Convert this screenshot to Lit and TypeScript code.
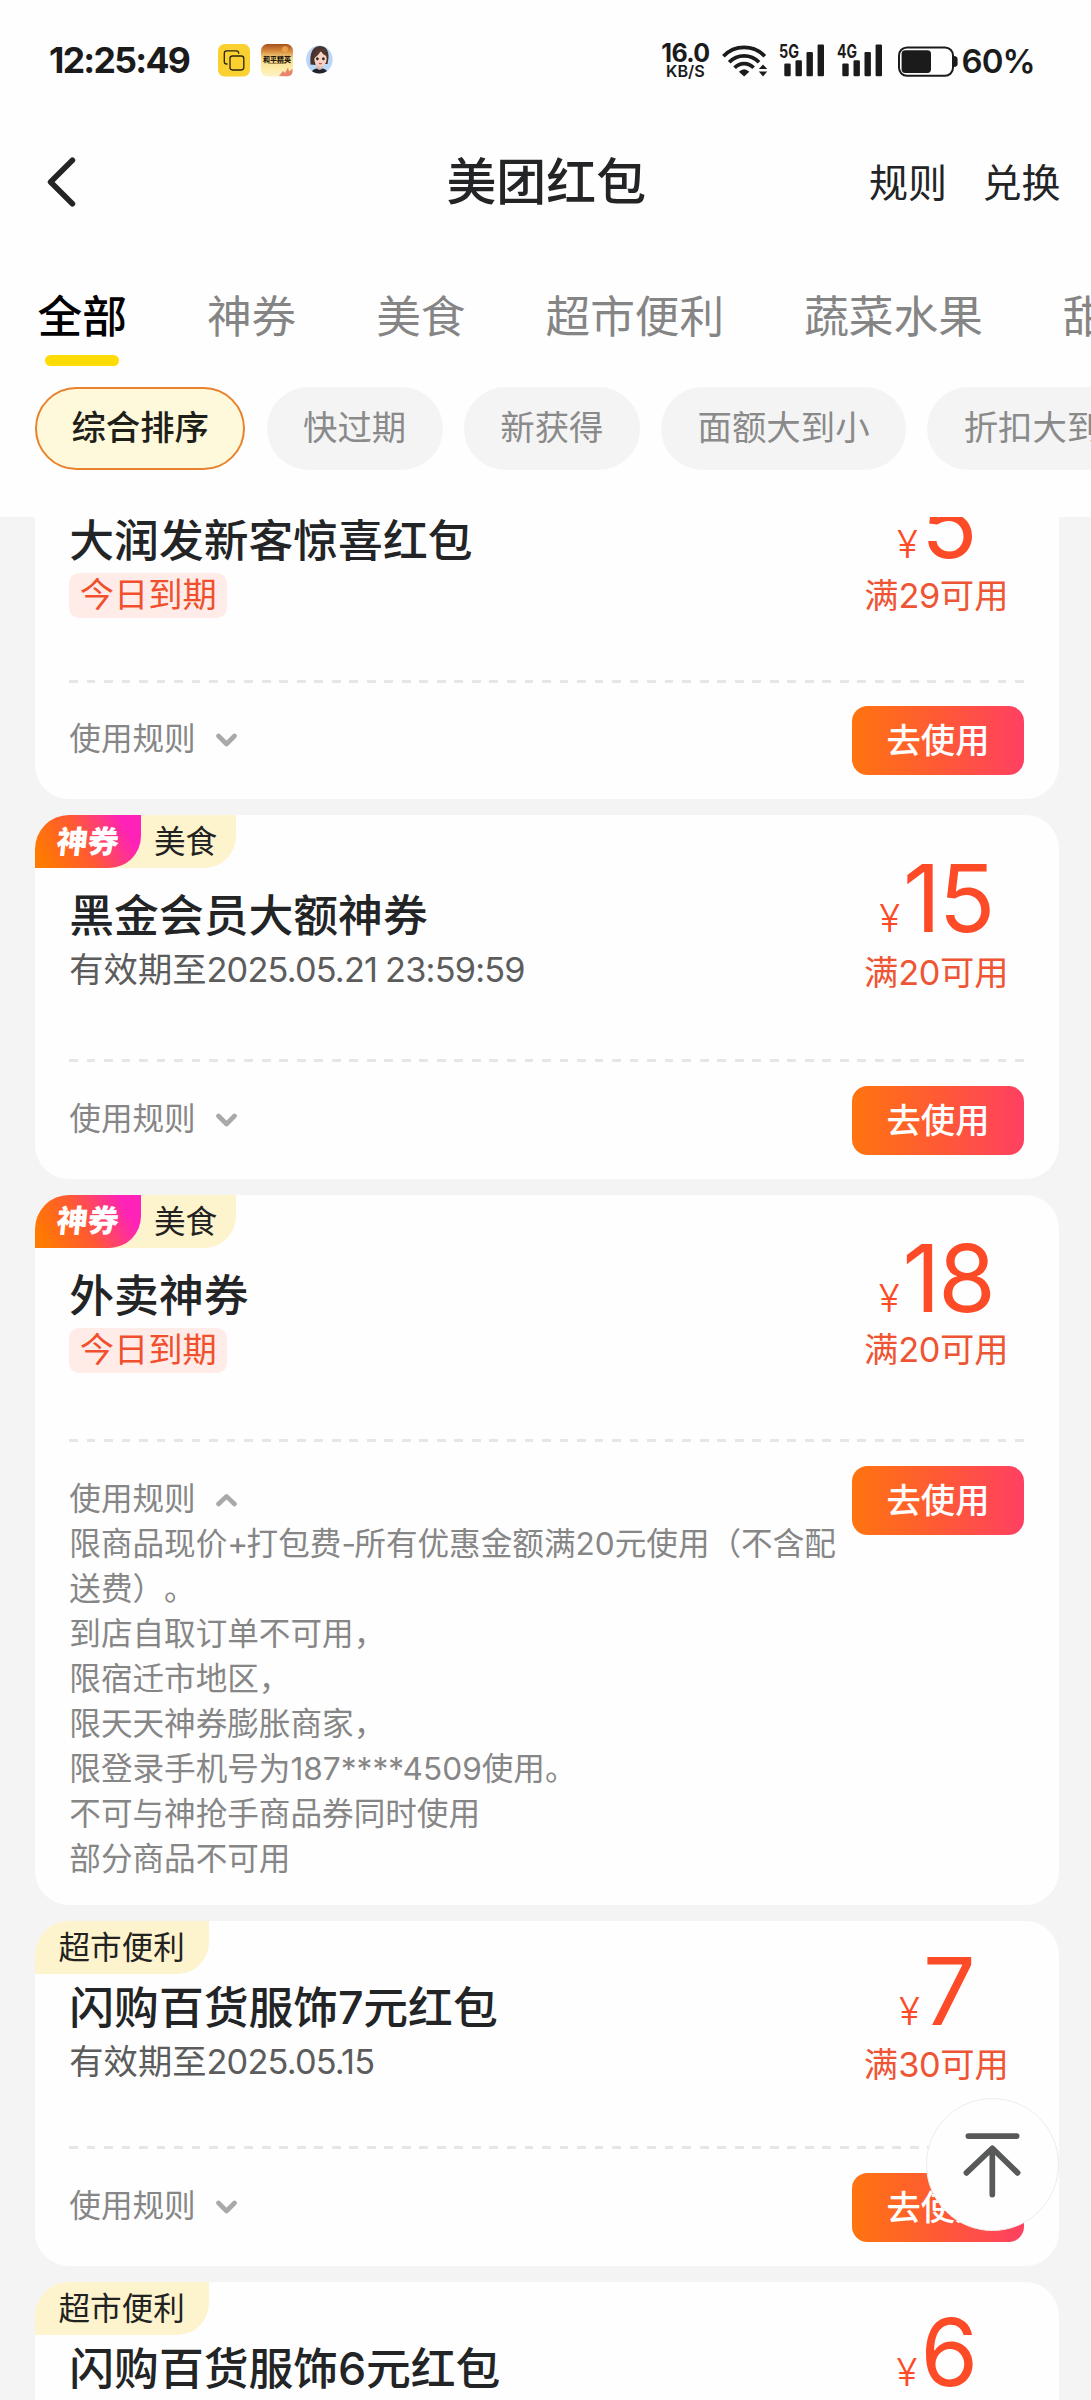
import { LitElement, html, css, svg, nothing } from "lit";
import { customElement, property } from "lit/decorators.js";

interface Coupon {
  shen?: boolean;
  tag?: string;
  title: string;
  expiry?: string;
  today?: boolean;
  amount: string;
  condition?: string;
  rules?: string[];
}

const TABS = ["全部", "神券", "美食", "超市便利", "蔬菜水果", "甜"];
const SORTS = ["综合排序", "快过期", "新获得", "面额大到小", "折扣大到"];

const COUPONS: Coupon[] = [
  { title: "大润发新客惊喜红包", today: true, amount: "5", condition: "满29可用" },
  { shen: true, tag: "美食", title: "黑金会员大额神券", expiry: "有效期至2025.05.21 23:59:59", amount: "15", condition: "满20可用" },
  {
    shen: true, tag: "美食", title: "外卖神券", today: true, amount: "18", condition: "满20可用",
    rules: [
      "限商品现价+打包费-所有优惠金额满20元使用（不含配送费）。",
      "到店自取订单不可用，",
      "限宿迁市地区，",
      "限天天神券膨胀商家，",
      "限登录手机号为187****4509使用。",
      "不可与神抢手商品券同时使用",
      "部分商品不可用",
    ],
  },
  { tag: "超市便利", title: "闪购百货服饰7元红包", expiry: "有效期至2025.05.15", amount: "7", condition: "满30可用" },
  { tag: "超市便利", title: "闪购百货服饰6元红包", amount: "6" },
];

// Latin runs are tightened a little so they sit evenly beside the Chinese glyphs.
const mixed = (text: string) =>
  text
    .split(/([\x20-\x7e]+)/)
    .map((part, i) => (i % 2 ? html`<span class=${/^[+-]$/.test(part) ? "sign" : "num"}>${part}</span>` : part));

@customElement("coupon-card")
class CouponCard extends LitElement {
  @property({ attribute: false }) coupon!: Coupon;

  static styles = css`
    :host { display: block; }
    .card { background: #fefefe; border-radius: 34px; overflow: hidden; }
    .header { display: flex; justify-content: space-between; height: 225.5px; }
    .shen .header { height: 244.3px; }
    .tags { display: flex; height: 53px; align-items: stretch; }
    .shen-tag {
      width: 106px; display: flex; align-items: center; justify-content: center;
      background: linear-gradient(62deg, #ff7a00 8%, #ff5a32 45%, #ff22b8 84%);
      border-radius: 0 0 32px 0; z-index: 1; color: #fff;
    }
    .shen-word { font-size: 31px; font-weight: 900; line-height: 40px; transform: skewX(-6deg); }
    .tag {
      padding: 0 24px 0 23.5px; background: #fdf3cc; border-radius: 0 0 32px 0;
      font-size: 31.6px; line-height: 53px; color: #222; font-weight: 400;
    }
    .shen .tag { margin-left: -32px; padding: 0 18.5px 0 45px; }
    .title {
      margin: 8.2px 0 0 34.3px; font-size: 44.8px; line-height: 52px; font-weight: 500;
      color: #222426; white-space: nowrap;
    }
    .shen .title { margin-top: 21.8px; }
    .desc { display: flex; margin: 6.1px 0 0 34.3px; height: 44.7px; line-height: 44.7px; font-size: 34.3px; white-space: nowrap; }
    .date { color: #5c5c5c; }
    .date .num { letter-spacing: -0.8px; word-spacing: -1px; }
    .today { padding: 0 10.4px; border-radius: 10px; background: #ffece8; color: #f0502e; }
    .worth { width: 168.6px; margin-right: 38px; padding-top: 22.9px; display: flex; flex-direction: column; align-items: center; color: #fd4b28; }
    .shen .worth { padding-top: 36.2px; }
    .price { display: flex; align-items: baseline; height: 95px; white-space: nowrap; }
    .yen { font-size: 38.6px; line-height: 40px; font-weight: 300; margin-right: 3px; }
    .amount { font-size: 93px; line-height: 95px; letter-spacing: -2px; }
    .cond { margin-top: 6.8px; font-size: 34.3px; line-height: 40px; color: #ee5534; white-space: nowrap; }
    .early .cond { margin-top: 3.9px; }
    .dash {
      height: 3px; margin: 0 34.3px;
      background: repeating-linear-gradient(90deg, #e6e6e6 0 8.8px, transparent 8.8px 17.52px);
    }
    .footer { display: flex; align-items: flex-start; justify-content: space-between; padding: 23.3px 34.3px 24px; }
    .rules { flex: 1; padding-top: 10.4px; font-size: 31.6px; line-height: 45px; color: #868686; text-spacing-trim: space-all; }
    .rules .num { letter-spacing: 0; }
    .sign { letter-spacing: -1.6px; }
    .toggle { display: flex; align-items: center; gap: 20.5px; }
    .toggle svg { width: 21px; height: 14px; margin-top: 3px; }
    .go {
      flex: none; width: 172.6px; height: 69.4px; border-radius: 15.5px; text-align: center;
      line-height: 69.4px; font-size: 34.3px; font-weight: 500; color: #fff;
      background: linear-gradient(90deg, #ff7410, #ff5a34 50%, #ff4062);
    }
    .num { letter-spacing: -0.4px; }
  `;

  render() {
    const c = this.coupon;
    return html`
      <div class="card ${c.shen ? "shen" : ""} ${c.today ? "early" : ""}">
        <div class="header">
          <div class="info">
            <div class="tags">
              ${c.shen ? html`<div class="shen-tag"><span class="shen-word">神券</span></div>` : nothing}
              ${c.tag ? html`<div class="tag">${c.tag}</div>` : nothing}
            </div>
            <div class="title">${mixed(c.title)}</div>
            <div class="desc">
              ${c.today ? html`<span class="today">今日到期</span>` : html`<span class="date">${mixed(c.expiry ?? "")}</span>`}
            </div>
          </div>
          <div class="worth">
            <div class="price"><span class="yen">¥</span><span class="amount">${c.amount}</span></div>
            <div class="cond">${mixed(c.condition ?? "")}</div>
          </div>
        </div>
        <div class="dash"></div>
        ${c.condition ? this.footer(c) : nothing}
      </div>
    `;
  }

  private footer(c: Coupon) {
    return html`
      <div class="footer">
        <div class="rules">
          <div class="toggle">
            <span>使用规则</span>
            <svg viewBox="0 0 21 14" fill="none" stroke="#a9a9a9" stroke-width="4.6" stroke-linecap="round" stroke-linejoin="round">
              <path d=${c.rules ? "M2.5 11 L10.5 3.4 L18.5 11" : "M2.5 3 L10.5 11 L18.5 3"} />
            </svg>
          </div>
          ${(c.rules ?? []).map((r) => html`<div>${mixed(r)}</div>`)}
        </div>
        <div class="go">去使用</div>
      </div>
    `;
  }
}

const signal = svg`
  <rect x="0.3" y="19.5" width="6.4" height="12.8" rx="1.2" />
  <rect x="11.5" y="16.2" width="6.4" height="16.1" rx="1.2" />
  <rect x="22.5" y="8" width="6.4" height="24.3" rx="1.2" />
  <rect x="33.6" y="0.4" width="6.4" height="31.9" rx="1.2" />`;

@customElement("app-root")
class AppRoot extends LitElement {
  static styles = css`
    :host {
      display: block; position: relative; width: 1091px; height: 2400px; overflow: hidden;
      background: #fefefe; font-family: Inter, "Noto Sans CJK SC", sans-serif; color: #222426;
    }
    .status { display: flex; height: 121px; box-sizing: border-box; padding: 0 58px 0 49px; color: #1b1b1b; }
    .clock { width: 169px; font-size: 35.6px; font-weight: 700; line-height: 121px; letter-spacing: -1.7px; white-space: nowrap; }
    .apps { display: flex; gap: 11px; padding-top: 44.4px; }
    .apps svg { width: 32px; height: 32.4px; display: block; }
    .indicators { margin-left: auto; display: flex; padding-top: 44.2px; }
    .indicators svg { display: block; flex: none; }
    .speed { width: 48px; display: flex; flex-direction: column; align-items: center; margin-right: 13px; white-space: nowrap; }
    .rate { font-size: 25px; line-height: 18px; font-weight: 700; letter-spacing: -0.6px; }
    .unit { font-size: 16.2px; line-height: 12px; margin-top: 2.6px; font-weight: 600; }
    .wifi { width: 46px; height: 33px; margin-right: 10.5px; }
    .cell { width: 46px; height: 33px; margin-right: 12.3px; overflow: visible; }
    .cell-name { font-size: 18.4px; font-weight: 700; }
    .battery { width: 61px; height: 33px; margin-right: 4px; margin-left: 1px; }
    .percent { width: 71.5px; font-size: 33px; line-height: 34px; font-weight: 600; letter-spacing: -0.9px; white-space: nowrap; }

    .nav { display: grid; grid-template-columns: 1fr auto 1fr; align-items: center; height: 122px; padding: 0 30.5px 0 46px; }
    .back { width: 31px; height: 52px; display: block; margin-bottom: 1px; }
    .heading { font-size: 49.9px; line-height: 60px; font-weight: 500; margin-left: -14.5px; margin-right: -14.5px; transform: translateX(-7px); }
    .links { display: flex; justify-content: flex-end; gap: 35.5px; font-size: 39px; line-height: 50px; padding-top: 2px; }

    .tabs { display: flex; gap: 79.9px; height: 144px; padding: 0 0 0 37.6px; overflow: hidden; box-sizing: border-box; }
    .tab { flex: none; display: flex; flex-direction: column; align-items: center; padding-top: 47px; font-size: 44.7px; line-height: 54px; color: #858585; }
    .tab.on { color: #000; font-weight: 500; }
    .tab.on::after { content: ""; width: 74px; height: 11px; border-radius: 6px; margin-top: 11px; background: #ffdc06; }

    .sorts { display: flex; gap: 21.3px; padding-left: 35px; height: 130px; overflow: hidden; }
    .sort {
      flex: none; box-sizing: border-box; height: 82.7px; padding: 0 36.4px; border-radius: 42px;
      background: #f4f4f4; color: #8a8a8a; font-size: 34.4px; line-height: 81.7px;
    }
    .sort.on { background: #fff9dc; color: #1f1f1a; font-weight: 500; border: 2px solid #e8822c; padding: 0 34.4px; line-height: 77.7px; }

    .list { height: 1883px; overflow: hidden; background: #f4f4f4; padding: 0 32.4px 0 35px; }
    .stack { display: flex; flex-direction: column; gap: 15.8px; margin-top: -62.8px; }

    .to-top {
      position: absolute; left: 926px; top: 2097.5px; width: 133px; height: 133px; box-sizing: border-box;
      border: 1.4px solid #ececea; border-radius: 50%; background: #fefefe;
    }
    .to-top svg { display: block; width: 100%; height: 100%; }
  `;

  private statusBar() {
    return html`
      <div class="status">
        <div class="clock">12:25:49</div>
        <div class="apps">
          <svg viewBox="0 0 32 32.4">
            <rect width="32" height="32.4" rx="6.5" fill="#fbd031" />
            <g fill="none" stroke="#2a2410" stroke-width="1.3">
              <path d="M9.5 20H8.6a2.3 2.3 0 0 1-2.3-2.3V9.2a2.3 2.3 0 0 1 2.3-2.3h9.8a2.3 2.3 0 0 1 2.3 2.3v.6" />
              <rect x="12" y="12" width="13.8" height="14" rx="2.4" />
            </g>
          </svg>
          <svg viewBox="0 0 32 32.4">
            <defs>
              <linearGradient id="sun" x1="0" y1="0" x2="0" y2="1">
                <stop offset="0" stop-color="#a4501c" />
                <stop offset="0.22" stop-color="#d98b3c" />
                <stop offset="0.45" stop-color="#f8dc90" />
                <stop offset="0.75" stop-color="#fdeca4" />
                <stop offset="1" stop-color="#fdf2c8" />
              </linearGradient>
            </defs>
            <rect width="32" height="32.4" rx="6.5" fill="url(#sun)" />
            <circle cx="24" cy="5" r="3" fill="#fbb95a" opacity="0.6" />
            <text x="16" y="17.6" text-anchor="middle" font-size="7" font-weight="900" fill="#2a1a08">和平精英</text>
            <rect x="7" y="18.8" width="18" height="1" fill="#6b4a1c" opacity="0.7" />
            <path d="M18 32 L22 27 L24 29 L27 23.5 L28 27.5 L31.5 25 V28 Q31 32 27 32.2 Z" fill="#e4685a" opacity="0.8" />
          </svg>
          <svg viewBox="0 0 32 32.4">
            <defs><clipPath id="face"><ellipse cx="15.4" cy="15.6" rx="13.3" ry="14" /></clipPath></defs>
            <g clip-path="url(#face)">
              <rect width="32" height="32.4" fill="#b9d7f6" />
              <path d="M6.5 20.5 Q5 3 15.5 2 Q25 2 24.5 14 L23.5 20 H20 V10 H11 L11.5 21 Z" fill="#4a332e" />
              <path d="M13 20 h5 v5 h-5z" fill="#edb9a3" />
              <ellipse cx="16.5" cy="15" rx="6.2" ry="7.4" fill="#f6d3c3" />
              <path d="M9.5 15 Q10 6 17 4.5 Q23 5 23.5 12 Q19 11.5 17 7 Q14 12 9.5 15z" fill="#523832" />
              <ellipse cx="13.4" cy="14.8" rx="1.3" ry="1.5" fill="#2b1c1a" />
              <ellipse cx="19.4" cy="14.8" rx="1.3" ry="1.5" fill="#2b1c1a" />
              <path d="M15 19.3 Q16.4 20.4 17.8 19.3" stroke="#c8505a" stroke-width="1.1" fill="none" />
              <path d="M6 32 Q7 25 13 24.4 Q15.5 27 18.3 24.4 Q24 25 25 32z" fill="#23232b" />
            </g>
          </svg>
        </div>
        <div class="indicators">
          <div class="speed"><span class="rate">16.0</span><span class="unit">KB/S</span></div>
          <svg class="wifi" viewBox="0 0 46 33">
            <g fill="none" stroke="#1b1b1b" stroke-width="3.7">
              <path d="M1.4 12.3 A28.6 28.6 0 0 1 42.8 12.3" />
              <path d="M7.2 18.2 A20.5 20.5 0 0 1 37 18.2" />
              <path d="M12.6 23.8 A13 13 0 0 1 31.6 23.8" />
            </g>
            <path d="M16.9 27.8 Q22.1 22.6 27.3 27.8 L22.1 32.6z" fill="#1b1b1b" />
            <path d="M36.8 25 L41 20.4 L45.2 25z M36.8 27.6 H45.2 L41 32.4z" fill="#1b1b1b" />
          </svg>
          ${["5G", "4G"].map(
            (name) => html`<svg class="cell" viewBox="-5 0 46 33" fill="#1b1b1b">
              <text class="cell-name" x="-5" y="13.6" textLength="20" lengthAdjust="spacingAndGlyphs">${name}</text>
              ${signal}
            </svg>`
          )}
          <svg class="battery" viewBox="0 0 61 33">
            <rect x="2" y="3.4" width="54" height="28.4" rx="8" fill="none" stroke="#1b1b1b" stroke-width="2" />
            <rect x="4.6" y="6.3" width="29.4" height="22.6" rx="3.6" fill="#1b1b1b" />
            <path d="M57 12 Q60.6 12.4 60.6 15 V20 Q60.6 22.6 57 23z" fill="#1b1b1b" />
          </svg>
          <div class="percent">60%</div>
        </div>
      </div>
    `;
  }

  render() {
    return html`
      ${this.statusBar()}
      <div class="nav">
        <svg class="back" viewBox="0 0 31 52" fill="none" stroke="#222426" stroke-width="5.6" stroke-linecap="round" stroke-linejoin="round">
          <path d="M26.4 4.3 L4.6 26 L26.4 47.7" />
        </svg>
        <div class="heading">美团红包</div>
        <div class="links"><span>规则</span><span>兑换</span></div>
      </div>
      <div class="tabs">${TABS.map((t, i) => html`<div class="tab ${i === 0 ? "on" : ""}">${t}</div>`)}</div>
      <div class="sorts">${SORTS.map((s, i) => html`<div class="sort ${i === 0 ? "on" : ""}">${s}</div>`)}</div>
      <div class="list">
        <div class="stack">${COUPONS.map((c) => html`<coupon-card .coupon=${c}></coupon-card>`)}</div>
      </div>
      <div class="to-top">
        <svg viewBox="0 0 133 133" fill="none" stroke="#585a5a" stroke-width="5.8" stroke-linecap="round" stroke-linejoin="round">
          <path d="M42 37.6 H91 M66.3 51 V97 M40 75 L66.3 50 L92 75" />
        </svg>
      </div>
    `;
  }
}
